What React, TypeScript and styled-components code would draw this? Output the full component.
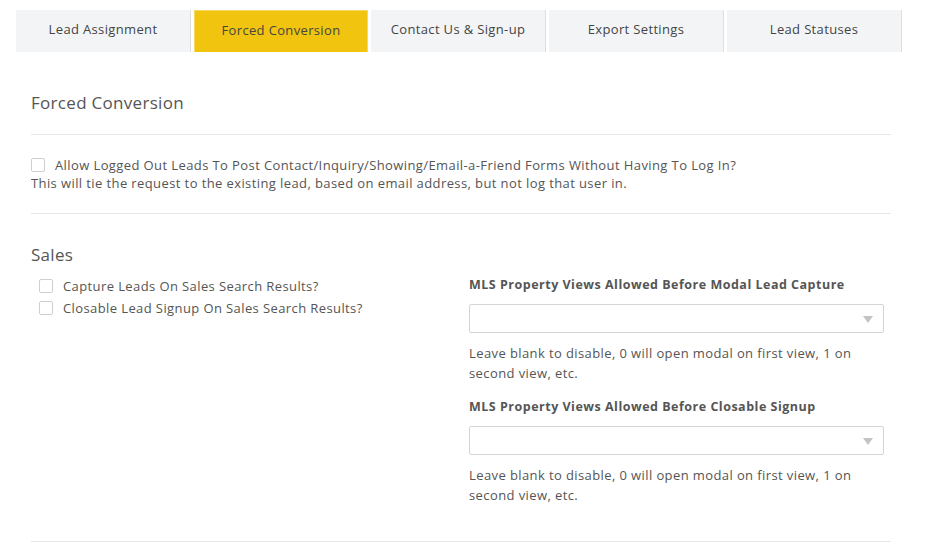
import styled, { createGlobalStyle } from "styled-components";

const GlobalStyle = createGlobalStyle`
  body {
    margin: 0;
    background: #fff;
    font-family: "Open Sans", "Lato", sans-serif;
    color: #555;
  }
`;

const Page = styled.div`
  width: 945px;
  height: 555px;
  overflow: hidden;
  padding-top: 10px;
  box-sizing: border-box;
`;

const TabBar = styled.div`
  display: flex;
  gap: 3px;
  padding-left: 16px;
`;

const Tab = styled.div<{ $active?: boolean }>`
  width: ${(p) => (p.$active ? "174px" : "175px")};
  height: 42px;
  box-sizing: border-box;
  display: flex;
  align-items: center;
  justify-content: center;
  font-size: 13px;
  letter-spacing: 0.35px;
  color: #444;
  padding-bottom: 4px;
  background: ${(p) => (p.$active ? "#f1c40f" : "#f3f4f6")};
  border-right: 1px solid ${(p) => (p.$active ? "#f6d860" : "#dcdee2")};
  border-left: ${(p) => (p.$active ? "1px solid #f6d860" : "none")};
  border-top: ${(p) => (p.$active ? "1px solid #f6d860" : "none")};
`;

const Content = styled.div`
  width: 860px;
  margin-left: 31px;
`;

const Heading = styled.h2`
  margin: 0;
  font-weight: 400;
  font-size: 17px;
  letter-spacing: 0.3px;
  color: #555;
  line-height: 20px;
`;

const Rule = styled.hr`
  border: none;
  border-top: 1px solid #e6e6e6;
  margin: 0;
`;

const Box = styled.span`
  display: inline-block;
  flex: none;
  width: 14px;
  height: 14px;
  border: 1px solid #cfcfcf;
  border-radius: 2px;
  background: #fff;
  box-sizing: border-box;
`;

const CheckRow = styled.label<{ $indent?: number; $tight?: boolean }>`
  display: flex;
  align-items: center;
  gap: 10px;
  font-size: 13px;
  letter-spacing: 0.4px;
  line-height: ${(p) => (p.$tight ? "18px" : "22px")};
  color: #555;
  padding-left: ${(p) => p.$indent ?? 0}px;
`;

const Note = styled.div`
  font-size: 13px;
  letter-spacing: 0.4px;
  line-height: 18px;
  color: #555;
`;

const SalesGrid = styled.div`
  display: grid;
  grid-template-columns: 438px 415px;
  margin-top: 10px;
`;

const FieldLabel = styled.div`
  font-size: 12.5px;
  font-weight: 700;
  letter-spacing: 0.5px;
  color: #555;
  line-height: 16px;
`;

const Select = styled.div`
  position: relative;
  height: 29px;
  border: 1px solid #d4d4d4;
  border-radius: 2px;
  box-sizing: border-box;
  margin-top: 11px;
  &::after {
    content: "";
    position: absolute;
    right: 10px;
    top: 11px;
    border-left: 5px solid transparent;
    border-right: 5px solid transparent;
    border-top: 7px solid #c4c4c4;
  }
`;

const Help = styled.div`
  font-size: 13px;
  letter-spacing: 0.4px;
  line-height: 20px;
  color: #555;
  margin-top: 10px;
`;

const Field = styled.div<{ $gap?: number }>`
  margin-top: ${(p) => p.$gap ?? 0}px;
`;

const tabs = [
  "Lead Assignment",
  "Forced Conversion",
  "Contact Us & Sign-up",
  "Export Settings",
  "Lead Statuses",
];

const help = "Leave blank to disable, 0 will open modal on first view, 1 on second view, etc.";

export default function App() {
  return (
    <Page>
      <GlobalStyle />
      <TabBar>
        {tabs.map((t) => (
          <Tab key={t} $active={t === "Forced Conversion"}>
            {t}
          </Tab>
        ))}
      </TabBar>
      <Content>
        <div style={{ height: 41 }} />
        <Heading>Forced Conversion</Heading>
        <div style={{ height: 21 }} />
        <Rule />
        <div style={{ height: 21 }} />
        <CheckRow $tight>
          <Box />
          Allow Logged Out Leads To Post Contact/Inquiry/Showing/Email-a-Friend Forms Without Having To Log In?
        </CheckRow>
        <Note>This will tie the request to the existing lead, based on email address, but not log that user in.</Note>
        <div style={{ height: 21 }} />
        <Rule />
        <div style={{ height: 31 }} />
        <Heading>Sales</Heading>
        <SalesGrid>
          <div>
            <CheckRow $indent={8}>
              <Box />
              Capture Leads On Sales Search Results?
            </CheckRow>
            <CheckRow $indent={8}>
              <Box />
              Closable Lead Signup On Sales Search Results?
            </CheckRow>
          </div>
          <div>
            <Field $gap={2}>
              <FieldLabel>MLS Property Views Allowed Before Modal Lead Capture</FieldLabel>
              <Select />
              <Help>{help}</Help>
            </Field>
            <Field $gap={16}>
              <FieldLabel>MLS Property Views Allowed Before Closable Signup</FieldLabel>
              <Select />
              <Help>{help}</Help>
            </Field>
          </div>
        </SalesGrid>
        <div style={{ height: 36 }} />
        <Rule />
      </Content>
    </Page>
  );
}
